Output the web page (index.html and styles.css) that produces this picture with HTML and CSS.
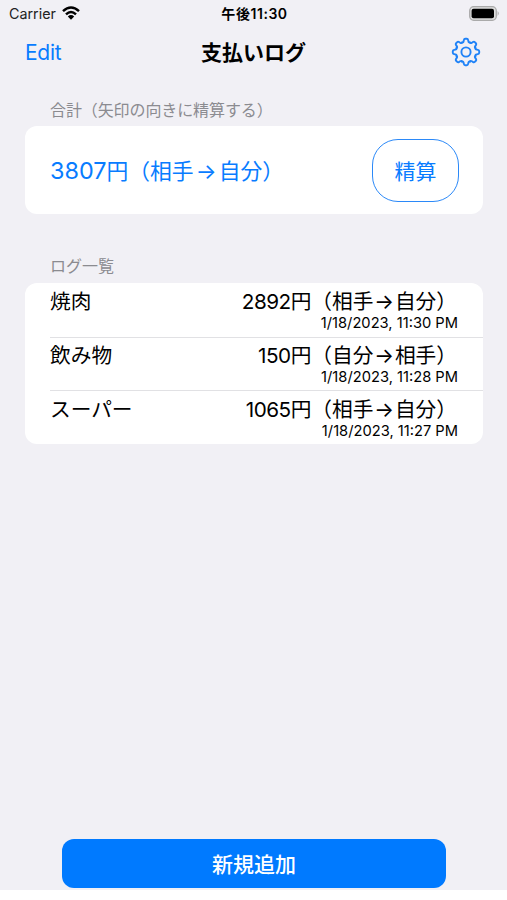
FILE: index.html
```html
<!DOCTYPE html>
<html lang="ja">
<head>
<meta charset="utf-8">
<title>支払いログ</title>
<link rel="stylesheet" href="styles.css">
</head>
<body>
<div class="screen">
  <div class="status">
    <div class="carrier"><span>Carrier</span>
      <svg class="wifi" width="18" height="14" viewBox="0 0 18 14"><g fill="none" stroke="#000" stroke-width="2.5"><path d="M1 5.2Q9-2.2 17 5.2"/><path d="M4 8.3Q9 3.7 14 8.3"/></g><path d="M9 13.7L5.8 10.4Q9 7.8 12.2 10.4Z"/></svg>
    </div>
    <div class="clock">午後11:30</div>
    <svg class="battery" width="31" height="15" viewBox="0 0 31 15"><rect x=".7" y=".7" width="26.6" height="13.6" rx="4" fill="#ddd" stroke="#aaa" stroke-width="1.3"/><rect x="2.6" y="2.7" width="22.4" height="9.6" rx="2" /><path d="M28.6 5.1Q31 7.5 28.6 9.9Z" fill="#aaa"/></svg>
  </div>
  <header class="nav">
    <a class="edit">Edit</a>
    <h1>支払いログ</h1>
    <svg class="gear" width="30" height="30" viewBox="-15 -15 30 30" fill="none" stroke="#1f82f7" stroke-width="1.9" stroke-linecap="round">
      <defs><path id="tooth" d="M-3.95 -9.54C-3 -9.15 -2.6 -9.7 -2.4 -10.7L-2.15 -11.9Q-1.9 -13.2 -.8 -13.2H.8Q1.9 -13.2 2.15 -11.9L2.4 -10.7C2.6 -9.7 3 -9.15 3.95 -9.54"/></defs>
      <use href="#tooth"/><use href="#tooth" transform="rotate(45)"/><use href="#tooth" transform="rotate(90)"/><use href="#tooth" transform="rotate(135)"/><use href="#tooth" transform="rotate(180)"/><use href="#tooth" transform="rotate(225)"/><use href="#tooth" transform="rotate(270)"/><use href="#tooth" transform="rotate(315)"/>
      <circle r="4.6"/>
    </svg>
  </header>
  <main>
    <h2 class="total-label">合計（矢印の向きに精算する）</h2>
    <section class="card total">
      <div class="sum"><span class="num">3807</span>円（相手<span class="arrow">→</span>自分）</div>
      <button class="settle">精算</button>
    </section>
    <h2 class="log-label">ログ一覧</h2>
    <section class="card log">
      <div class="row"><div class="name">焼肉</div><div class="detail"><div class="amount"><span class="num">2892</span>円（相手<span class="arrow">→</span>自分）</div><time>1/18/2023, 11:30 PM</time></div></div>
      <div class="row"><div class="name">飲み物</div><div class="detail"><div class="amount"><span class="num">150</span>円（自分<span class="arrow">→</span>相手）</div><time>1/18/2023, 11:28 PM</time></div></div>
      <div class="row"><div class="name">スーパー</div><div class="detail"><div class="amount"><span class="num">1065</span>円（相手<span class="arrow">→</span>自分）</div><time>1/18/2023, 11:27 PM</time></div></div>
    </section>
  </main>
  <button class="add">新規追加</button>
</div>
</body>
</html>
```
FILE: styles.css
```css
* { box-sizing: border-box; }
body {
  margin: 0;
  background: #fff;
  color: #000;
  font-family: Inter, "Noto Sans CJK JP", sans-serif;
  text-spacing-trim: space-all;
  white-space: nowrap;
}
h1, h2 { margin: 0; }
button { font-family: inherit; padding: 0; }
.screen {
  height: 890px;
  background: #f1f0f5;
  display: flex;
  flex-direction: column;
}
.status {
  height: 27px;
  padding: 0 7px 0 9px;
  display: grid;
  grid-template-columns: 1fr auto 1fr;
  align-items: center;
}
.carrier {
  display: flex;
  align-items: center;
  gap: 6px;
  font-size: 14.3px;
  line-height: 27px;
  color: #222;
}
.wifi { margin-top: -2px; }
.clock { font-size: 14px; line-height: 27px; font-weight: 600; letter-spacing: .55px; }
.battery { justify-self: end; }
.nav {
  height: 50px;
  padding: 0 26px 0 25px;
  display: grid;
  grid-template-columns: 1fr auto 1fr;
  align-items: center;
}
.edit { color: #087cff; font-size: 21px; line-height: 52px; letter-spacing: -.3px; }
.nav h1 { padding-left: 1px; font-size: 21px; line-height: 52px; font-weight: 600; }
.gear { justify-self: end; margin-top: -2px; }
main { padding: 0 24px 0 25px; }
main h2 {
  padding-left: 25px;
  color: #8b8b90;
  font-size: 16px;
  font-weight: 400;
}
.total-label { margin-top: 20px; height: 29px; line-height: 26px; letter-spacing: -.1px; }
.log-label { margin-top: 40px; height: 29px; line-height: 25px; }
.card { background: #fff; border-radius: 12px; }
.total {
  height: 88px;
  padding: 0 24px 0 25px;
  display: flex;
  justify-content: space-between;
  align-items: center;
}
.sum { font-size: 21.8px; line-height: 30px; margin-top: 2px; color: #087cff; }
.sum .num { font-size: 23.4px; }
.sum .arrow { width: 25px; text-align: center; }
.settle {
  width: 87px;
  height: 63px;
  border: 1.5px solid #2b89f8;
  border-radius: 26px;
  background: none;
  color: #087cff;
  font-size: 21px;
}
.row {
  height: 53.7px;
  margin-left: 25px;
  padding: .4px 25px 0 0;
  display: flex;
  justify-content: space-between;
  font-size: 20.7px;
  line-height: 38px;
}
.row + .row { box-shadow: inset 0 1px #e1e1e4; }
.detail { text-align: right; }
.amount { height: 33px; padding-right: 1px; }
.amount .num { letter-spacing: -.5px; }
.amount .arrow { width: 21.5px; text-align: center; }
time { display: block; font-size: 14.7px; line-height: 14px; }
.arrow { display: inline-block; }
.add {
  width: 384px;
  height: 49px;
  margin: auto auto 2px 62px;
  padding-top: 1px;
  border: 0;
  border-radius: 12px;
  background: #007aff;
  color: #fff;
  font-size: 21px;
  line-height: 47px;
  font-weight: 500;
}
```
